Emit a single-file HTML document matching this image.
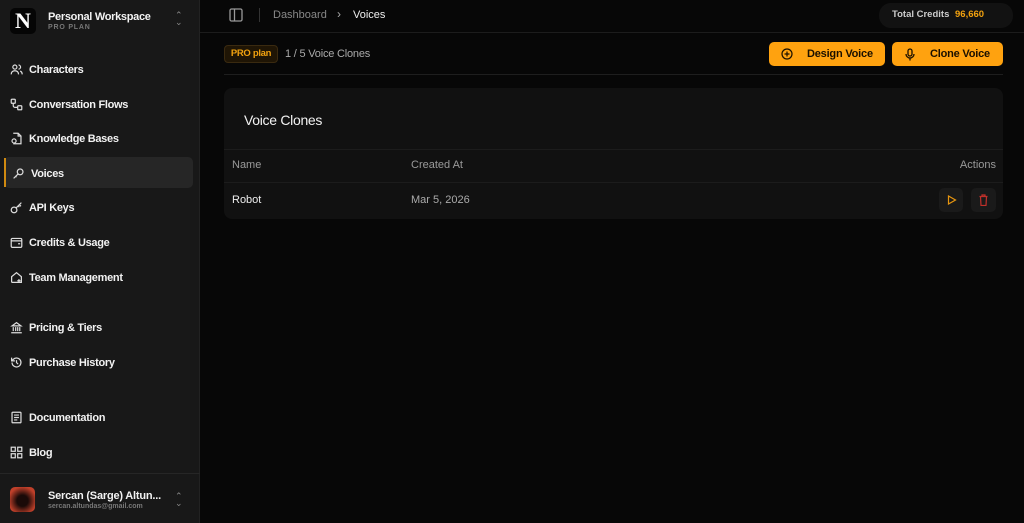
<!DOCTYPE html>
<html><head><meta charset="utf-8"><style>
*{box-sizing:border-box;margin:0;padding:0}
body{width:1024px;height:523px;background:#070707;font-family:"Liberation Sans",sans-serif;color:#eee;position:relative;overflow:hidden}
.sb{position:absolute;left:0;top:0;width:200px;height:523px;background:#181818;border-right:1px solid #222}
.abs{position:absolute}
.nav{position:absolute;left:10px;font-size:11px;font-weight:bold;color:#f2f2f2;display:flex;align-items:center;gap:6px;letter-spacing:-0.3px}
.nav svg{width:13px;height:13px;stroke:#ddd;fill:none;stroke-width:1.5}
.hd{position:absolute;left:200px;top:0;right:0;height:33px;border-bottom:1px solid #1c1c1c}
.btn{position:absolute;top:42px;height:24px;background:#ffa20f;border-radius:5px;color:#1a1000;font-size:11px;font-weight:bold;display:flex;align-items:center;letter-spacing:-0.2px}
.card{position:absolute;left:224px;top:88px;width:779px;height:131px;background:#111;border-radius:8px}
.t{position:absolute;font-size:11px;color:#9a9a9a}
</style></head><body>
<div class="sb">
  <div class="abs" style="left:10px;top:8px;width:26px;height:26px;background:#050505;border-radius:5px;color:#fff;font:bold 22px 'Liberation Serif',serif;text-align:center;line-height:26px">N</div>
  <div class="abs" style="left:48px;top:11px;font-size:11px;font-weight:bold;color:#f2f2f2;letter-spacing:-0.3px">Personal Workspace</div>
  <div class="abs" style="left:48px;top:24px;font-size:7px;font-weight:bold;color:#777;letter-spacing:0.8px">PRO PLAN</div>
  <div class="abs" style="left:175px;top:12px;font-size:9px;color:#888;line-height:7px">⌃<br>⌄</div>
  <div class="abs" style="left:4px;top:157px;width:189px;height:31px;background:#262626;border-radius:5px"></div>
  <div class="abs" style="left:4px;top:158px;width:2px;height:29px;background:#d08a10"></div>
  <div class="nav" style="top:63px"><svg viewBox="0 0 16 16"><circle cx="6" cy="5" r="2.5"/><path d="M1.5 14c0-3 2-4.5 4.5-4.5s4.5 1.5 4.5 4.5M10.5 2.5a2.5 2.5 0 010 5M12.5 10c1.5.5 2.5 2 2.5 4"/></svg>Characters</div>
  <div class="nav" style="top:98px"><svg viewBox="0 0 16 16"><rect x="1.5" y="1.5" width="5" height="5" rx="1"/><rect x="9.5" y="9.5" width="5" height="5" rx="1"/><path d="M4 6.5v3a2 2 0 002 2h3.5"/></svg>Conversation Flows</div>
  <div class="nav" style="top:132px"><svg viewBox="0 0 16 16"><path d="M4 1.5h6l3.5 3.5v9.5H4M10 1.5V5h3.5"/><circle cx="5" cy="11" r="2.5"/></svg>Knowledge Bases</div>
  <div class="nav" style="top:167px;left:12px"><svg viewBox="0 0 16 16"><circle cx="10" cy="6" r="3.5"/><path d="M7.5 8.5L2 14M4 11l1.5 1.5"/></svg>Voices</div>
  <div class="nav" style="top:201px"><svg viewBox="0 0 16 16"><circle cx="5" cy="11" r="3.5"/><path d="M7.5 8.5L14 2M11.5 4.5l2 2M10 6l1.5 1.5"/></svg>API Keys</div>
  <div class="nav" style="top:236px"><svg viewBox="0 0 16 16"><rect x="1.5" y="3" width="13" height="11" rx="1.5"/><path d="M1.5 6h13M10 9.5h2.5"/></svg>Credits &amp; Usage</div>
  <div class="nav" style="top:271px"><svg viewBox="0 0 16 16"><path d="M2 14V7l6-5 6 5v7H2"/><path d="M11 10v4M9 12h4"/></svg>Team Management</div>
  <div class="nav" style="top:321px"><svg viewBox="0 0 16 16"><path d="M1.5 14.5h13M2.5 6h11L8 2zM4 7.5v5M7 7.5v5M9.5 7.5v5M12 7.5v5"/></svg>Pricing &amp; Tiers</div>
  <div class="nav" style="top:356px"><svg viewBox="0 0 16 16"><path d="M2.5 8a5.5 5.5 0 101.6-3.9L2 6M2 2v4h4M8 5v3l2 2"/></svg>Purchase History</div>
  <div class="nav" style="top:411px"><svg viewBox="0 0 16 16"><rect x="2.5" y="1.5" width="11" height="13" rx="1"/><path d="M5 5h6M5 8h6M5 11h4"/></svg>Documentation</div>
  <div class="nav" style="top:446px"><svg viewBox="0 0 16 16"><rect x="1.5" y="1.5" width="5" height="5"/><rect x="9.5" y="1.5" width="5" height="5"/><rect x="1.5" y="9.5" width="5" height="5"/><rect x="9.5" y="9.5" width="5" height="5"/></svg>Blog</div>
  <div class="abs" style="left:0;top:473px;width:200px;border-top:1px solid #262626"></div>
  <div class="abs" style="left:10px;top:487px;width:25px;height:25px;border-radius:5px;background:radial-gradient(circle at 50% 55%,#1a0a08 30%,#c0402a 75%)"></div>
  <div class="abs" style="left:48px;top:490px;font-size:11px;font-weight:bold;color:#f2f2f2;letter-spacing:-0.2px">Sercan (Sarge) Altun...</div>
  <div class="abs" style="left:48px;top:503px;font-size:7px;font-weight:bold;color:#777">sercan.altundas@gmail.com</div>
  <div class="abs" style="left:175px;top:493px;font-size:9px;color:#888;line-height:7px">⌃<br>⌄</div>
</div>
<div class="hd">
  <svg class="abs" style="left:29px;top:8px" width="14" height="14" viewBox="0 0 14 14" fill="none" stroke="#999" stroke-width="1.3"><rect x="1" y="1" width="12" height="12" rx="1.5"/><path d="M5.5 1v12"/></svg>
  <div class="abs" style="left:59px;top:8px;height:14px;border-left:1px solid #333"></div>
  <div class="abs" style="left:73px;top:9px;font-size:11px;color:#888">Dashboard</div>
  <div class="abs" style="left:137px;top:7px;font-size:12px;color:#aaa">›</div>
  <div class="abs" style="left:153px;top:9px;font-size:11px;color:#eee">Voices</div>
  <div class="abs" style="left:679px;top:3px;width:134px;height:25px;background:#121212;border-radius:12px;font-size:9.5px;font-weight:bold;color:#ccc;padding:6px 0 0 13px">Total Credits <span style="color:#f2a20f;margin-left:3px">96,660</span></div>
</div>
<div class="abs" style="left:224px;top:45px;width:54px;height:18px;background:#1f1505;border:1px solid #3a2a10;border-radius:4px;color:#f2a20f;font-size:9.5px;font-weight:bold;text-align:center;line-height:16px;letter-spacing:-0.3px">PRO plan</div>
<div class="abs" style="left:285px;top:48px;font-size:11px;color:#aaa;letter-spacing:-0.2px">1 / 5 Voice Clones</div>
<div class="btn" style="left:769px;width:116px"><svg style="margin-left:12px" width="12" height="12" viewBox="0 0 12 12" fill="none" stroke="#1a1000" stroke-width="1.2"><circle cx="6" cy="6" r="5"/><path d="M6 3.5v5M3.5 6h5"/></svg><span style="margin-left:14px">Design Voice</span></div>
<div class="btn" style="left:892px;width:111px"><svg style="margin-left:13px" width="10" height="13" viewBox="0 0 10 13" fill="none" stroke="#1a1000" stroke-width="1.3"><rect x="3" y="1" width="4" height="7" rx="2"/><path d="M1 6a4 4 0 008 0M5 10v2.5"/></svg><span style="margin-left:15px">Clone Voice</span></div>
<div class="abs" style="left:224px;top:74px;width:779px;border-top:1px solid #1e1e1e"></div>
<div class="card">
  <div class="abs" style="left:20px;top:24px;font-size:14px;color:#f2f2f2;letter-spacing:-0.3px">Voice Clones</div>
  <div class="abs" style="left:0;top:61px;width:779px;border-top:1px solid #1c1c1c"></div>
  <div class="t" style="left:8px;top:71px">Name</div>
  <div class="t" style="left:187px;top:71px">Created At</div>
  <div class="t" style="right:7px;top:71px">Actions</div>
  <div class="abs" style="left:0;top:94px;width:779px;border-top:1px solid #1c1c1c"></div>
  <div class="t" style="left:8px;top:106px;color:#eee">Robot</div>
  <div class="t" style="left:187px;top:106px;color:#aaa">Mar 5, 2026</div>
  <div class="abs" style="left:715px;top:100px;width:24px;height:24px;background:#1a1a1a;border-radius:5px"><svg style="margin:7px 0 0 8px" width="10" height="10" viewBox="0 0 10 10" fill="none" stroke="#e8960f" stroke-width="1.2"><path d="M1.5 1l7 4-7 4z"/></svg></div>
  <div class="abs" style="left:747px;top:100px;width:25px;height:24px;background:#1a1a1a;border-radius:5px"><svg style="margin:6px 0 0 8px" width="9" height="12" viewBox="0 0 9 12" fill="none" stroke="#c0302a" stroke-width="1.2"><path d="M0.5 2.5h8M3 2.5V1h3v1.5M1.5 2.5l.5 9h5l.5-9"/></svg></div>
</div>
</body></html>
